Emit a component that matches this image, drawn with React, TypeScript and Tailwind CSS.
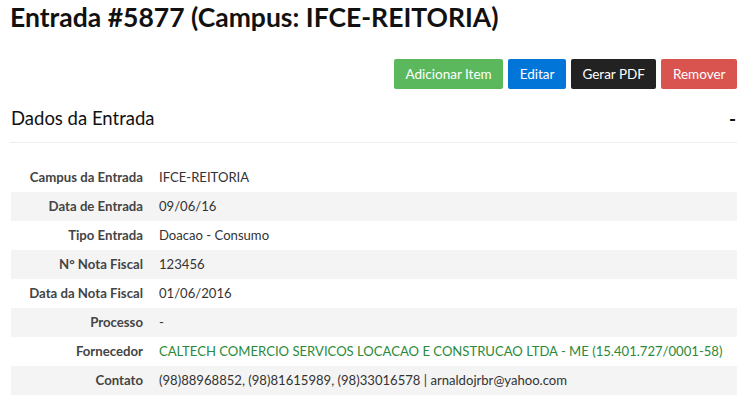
import React from 'react';

const rows: { label: string; value: string; green?: boolean }[] = [
  { label: 'Campus da Entrada', value: 'IFCE-REITORIA' },
  { label: 'Data de Entrada', value: '09/06/16' },
  { label: 'Tipo Entrada', value: 'Doacao - Consumo' },
  { label: 'N° Nota Fiscal', value: '123456' },
  { label: 'Data da Nota Fiscal', value: '01/06/2016' },
  { label: 'Processo', value: '-' },
  { label: 'Fornecedor', value: 'CALTECH COMERCIO SERVICOS LOCACAO E CONSTRUCAO LTDA - ME (15.401.727/0001-58)', green: true },
  { label: 'Contato', value: '(98)88968852, (98)81615989, (98)33016578 | arnaldojrbr@yahoo.com' },
];

export default function App() {
  return (
    <div className="w-[745px] h-[397px] overflow-hidden bg-white text-[#333] font-['Lato',sans-serif]">
      <div className="pl-[10px] pr-[8px]">
        <h1 className="pt-[2px] text-[26.5px] leading-[31px] font-bold text-[#111]">Entrada #5877 (Campus: IFCE-REITORIA)</h1>

        <div className="mt-[26px] flex justify-end gap-[5px] text-[13.5px] text-white">
          <button className="h-[30px] px-[11.5px] rounded-[2px] bg-[#5cb85c]">Adicionar Item</button>
          <button className="h-[30px] px-[11.5px] rounded-[2px] bg-[#0275d8]">Editar</button>
          <button className="h-[30px] px-[11.5px] rounded-[2px] bg-[#222]">Gerar PDF</button>
          <button className="h-[30px] px-[11.5px] rounded-[2px] bg-[#d9534f]">Remover</button>
        </div>

        <div className="mt-[16px] flex items-center justify-between pl-[1px] pb-[11px] border-b border-[#eee]">
          <h2 className="text-[18.5px] leading-[26px] text-[#111]">Dados da Entrada</h2>
          <span className="translate-y-[1px] font-bold text-[#111] text-[19px] leading-[26px] pr-[1px]">-</span>
        </div>

        <table className="mt-[20px] ml-[1px] w-[726px] text-[13.1px] border-collapse">
          <tbody>
            {rows.map((r, i) => (
              <tr key={r.label} className={i % 2 === 1 ? 'bg-[#f4f4f4]' : ''}>
                <td className="w-[140px] h-[29px] px-[8px] text-right text-[13.2px] font-bold text-[#444] whitespace-nowrap">{r.label}</td>
                <td className={`h-[29px] px-[8px] whitespace-nowrap ${r.green ? 'text-[#2a8a3a]' : 'text-[#333]'}`}>{r.value}</td>
              </tr>
            ))}
          </tbody>
        </table>
      </div>
    </div>
  );
}
